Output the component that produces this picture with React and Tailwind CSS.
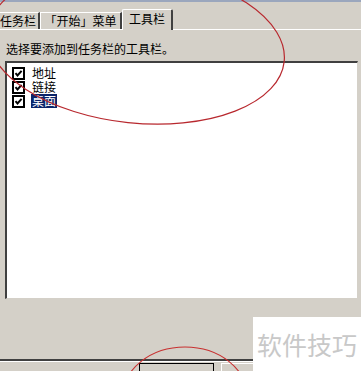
import React from 'react';

const font = { fontFamily: '"Noto Sans CJK SC", "Noto Sans", sans-serif' };

const CheckBox = () => (
    <svg width="13" height="13" viewBox="0 0 13 13" className="shrink-0">
        <rect x="0" y="0" width="13" height="13" fill="#000" />
        <rect x="2" y="2" width="9" height="9" fill="#fff" />
        <path d="M3.5 6.2 L5.5 8.4 L9.6 3.8" stroke="#000" strokeWidth="2" fill="none" />
    </svg>
);

const items = [
    { label: '地址', selected: false },
    { label: '链接', selected: false },
    { label: '桌面', selected: true },
];

export default function App() {
    return (
        <div
            className="relative w-[361px] h-[371px] overflow-hidden bg-[#d4d0c8] text-[12px] text-black"
            style={font}
        >
            <div className="h-[2px] bg-[#9aa6bd]" />

            {/* tab strip */}
            <div className="flex items-end h-[27px]">
                <div className="flex items-center shrink-0 w-[40px] h-[17px] whitespace-nowrap border-t border-r-2 border-white border-r-[#404040] leading-none">
                    任务栏
                </div>
                <div className="flex items-center justify-center shrink-0 w-[82px] h-[17px] whitespace-nowrap border-t border-l border-r-2 border-white border-r-[#404040] leading-none">
                    「开始」菜单
                </div>
                <div className="relative z-10 flex items-center justify-center shrink-0 w-[51px] h-[21px] -mb-[1px] pb-[2px] whitespace-nowrap bg-[#d4d0c8] border-t border-l border-r-2 border-white border-r-[#404040] rounded-t-[2px] leading-none">
                    工具栏
                </div>
                <div className="flex-1" />
            </div>
            <div className="h-[1px] bg-white" />

            {/* page body */}
            <div className="pl-[5px] pr-[3px] pt-[12px]">
                <div className="leading-[13px] pl-[1px] whitespace-nowrap">选择要添加到任务栏的工具栏。</div>
                <div className="mt-[6px] h-[238px] bg-white border-t-2 border-l-2 border-t-[#404040] border-l-[#404040] border-r border-b border-r-[#d4d0c8] border-b-[#d4d0c8] pt-[3px] pl-[5px]">
                    {items.map((item) => (
                        <div key={item.label} className="flex items-center h-[14px] gap-[6px]">
                            <CheckBox />
                            <span
                                className={
                                    item.selected
                                        ? 'bg-[#0a246a] text-white px-[1px] leading-[14px]'
                                        : 'px-[1px] leading-[14px]'
                                }
                            >
                                {item.label}
                            </span>
                        </div>
                    ))}
                </div>
            </div>

            {/* frame bottom + buttons */}
            <div className="mt-[60px] h-[2px] bg-[#404040]" />
            <div className="h-[1px] bg-white" />
            <div className="flex gap-[7px] pl-[139px] pt-[1px]">
                <div className="w-[75px] h-[12px] border border-black border-b-0 bg-[#d4d0c8]" />
                <div className="w-[75px] h-[12px] border-t border-l border-white bg-[#d4d0c8]" />
            </div>

            {/* watermark */}
            <div className="absolute left-[253px] top-[317px] w-[108px] h-[54px] bg-white flex items-center pl-[4px]">
                <span className="text-[25px] leading-none text-[#c8c8c8] whitespace-nowrap" style={font}>
                    软件技巧
                </span>
            </div>

            {/* hand-drawn red marks */}
            <svg className="absolute inset-0 pointer-events-none" width="361" height="371">
                <ellipse
                    cx="136"
                    cy="46"
                    rx="149"
                    ry="77"
                    transform="rotate(6 136 46)"
                    fill="none"
                    stroke="#b8282e"
                    strokeWidth="1.2"
                />
                <ellipse cx="185" cy="396" rx="62" ry="49" fill="none" stroke="#c83030" strokeWidth="1.1" />
            </svg>
        </div>
    );
}
